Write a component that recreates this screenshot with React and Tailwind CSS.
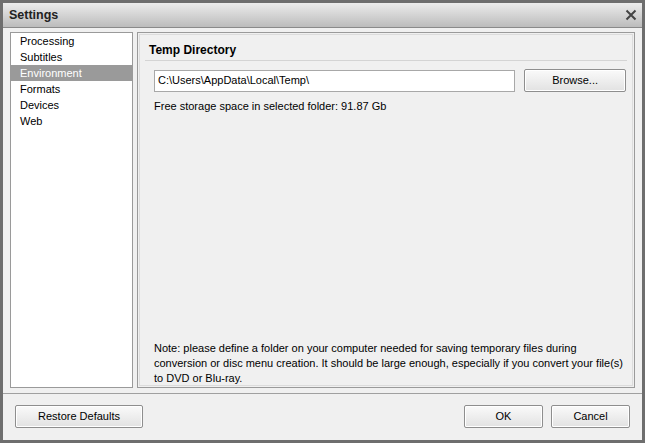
import React from "react";

const items = ["Processing", "Subtitles", "Environment", "Formats", "Devices", "Web"];

const Button = ({children, className}) => (
  <button className={`h-[23px] border border-[#8e8e8e] rounded-[2px] bg-gradient-to-b from-[#fafafa] to-[#e2e2e2] text-[11px] text-black shadow-[inset_0_0_0_1px_#ffffff] ${className}`}>
    {children}
  </button>
);

export default function App() {
  return (
    <div className="w-[645px] h-[443px] bg-[#f0f0f0] border-[3px] border-[#6e6e6e] flex flex-col text-[11px] text-black" style={{fontFamily: '"Liberation Sans", Arial, sans-serif'}}>
      {/* title bar */}
      <div className="h-[24px] shrink-0 flex items-center justify-between pl-[6px] pr-[5px] bg-gradient-to-b from-[#ececec] to-[#bcbcbc]">
        <span className="font-bold text-[12.5px] text-[#222]">Settings</span>
        <svg width="12" height="12" viewBox="0 0 12 12">
          <path d="M1.5 1.5 L10.5 10.5 M10.5 1.5 L1.5 10.5" stroke="#444" strokeWidth="2" />
        </svg>
      </div>

      <div className="flex-1 flex flex-col border-t border-[#8a8a8a]">
        <div className="flex gap-[4px] px-[7px] pt-[4px] h-[360px]">
          {/* left list */}
          <div className="w-[123px] shrink-0 bg-white border border-[#9a9a9a]">
            {items.map((it) => (
              <div key={it} className={`h-[16px] leading-[16px] pl-[9px] ${it === "Environment" ? "bg-[#9a9a9a] text-white" : ""}`}>{it}</div>
            ))}
          </div>

          {/* right panel */}
          <div className="flex-1 min-w-0 border border-[#9a9a9a] p-[1px]">
            <div className="h-full border border-[#dcdcdc] flex flex-col px-[5px]">
              <div className="mt-[6px] pl-[4px] pb-[1px] border-b border-[#d4d4d4] font-bold text-[12px]">Temp Directory</div>
              <div className="flex items-center mt-[8px] pl-[9px] pr-[1px] gap-[9px]">
                <div className="w-[362px] h-[22px] bg-white border border-[#a8a8a8] flex items-center pl-[3px]">C:\Users\AppData\Local\Temp\</div>
                <Button className="w-[102px]">Browse...</Button>
              </div>
              <div className="mt-[6px] pl-[9px]">Free storage space in selected folder: 91.87 Gb</div>
              <div className="mt-auto mb-[-1px] pl-[9px] leading-[15px]">
                Note: please define a folder on your computer needed for saving temporary files during conversion or disc menu creation. It should be large enough, especially if you convert your file(s) to DVD or Blu-ray.
              </div>
            </div>
          </div>
        </div>

        <div className="mt-[5px] border-t border-[#a0a0a0] flex-1 flex items-center px-[12px] pb-[1px]">
          <Button className="w-[128px]">Restore Defaults</Button>
          <div className="flex-1" />
          <Button className="w-[79px]">OK</Button>
          <Button className="w-[79px] ml-[8px]">Cancel</Button>
        </div>
      </div>
    </div>
  );
}
